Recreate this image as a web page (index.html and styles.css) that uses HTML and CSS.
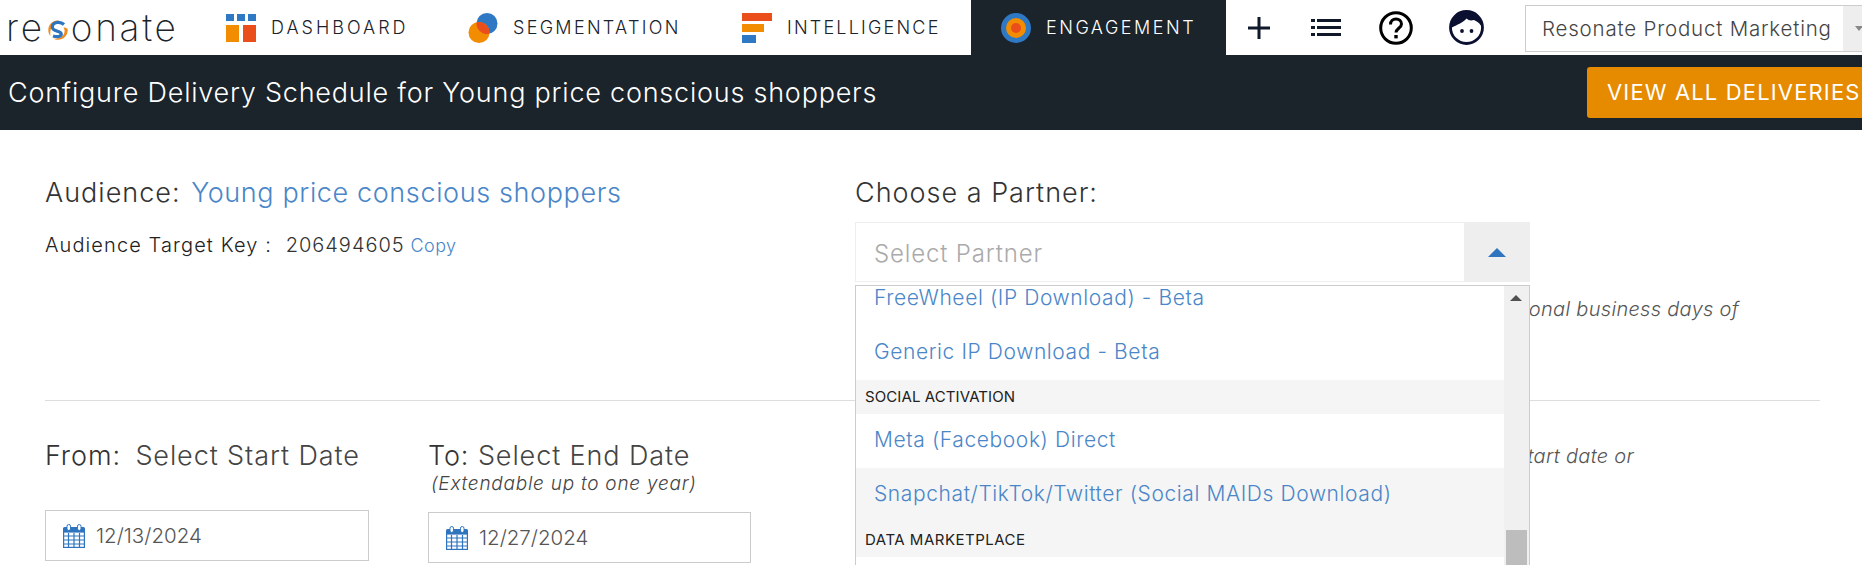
FILE: index.html
```html
<!DOCTYPE html>
<html lang="en">
<head>
<meta charset="utf-8">
<title>Configure Delivery Schedule</title>
<link rel="stylesheet" href="styles.css">
</head>
<body>
<header class="topbar">
  <div class="logo">
    <span>re</span>
    <svg class="logo-s" viewBox="0 0 20 20" width="20" height="20" aria-hidden="true">
      <path d="M11 .3C5 0 .3 4.500.3 10c0 2.500.8 4.500 2.200 6C1.500 10 4 2.500 11 .3z" fill="#f08c1e"/>
      <path d="M19.700 9c.5 6-4 10.700-9.700 10.700-2 0-3.500-.4-5-1.300 6 1.500 12.500-2.500 11.500-8.500-.2-1-.5-1.800-1-2.500 2 0 3.500.6 4.200 1.600z" fill="#f08c1e"/>
      <path d="M16 4.500C12 .8 4.500 2 4.300 7c0 5 9 3.500 9 7 0 2.500-4 3.500-8.300 2" fill="none" stroke="#2e74bf" stroke-width="3.200"/>
    </svg>
    <span>onate</span>
  </div>
  <nav class="nav">
    <a class="nav-item nav-dash">
      <svg viewBox="0 0 30 28" width="30" height="28" aria-hidden="true">
        <rect x="0" y="0" width="8" height="7" fill="#2e78c4"/><rect x="11" y="0" width="8" height="7" fill="#2e78c4"/><rect x="22" y="0" width="8" height="7" fill="#2e78c4"/>
        <rect x="0" y="11" width="13" height="17" fill="#f28c00"/><rect x="17" y="11" width="13" height="17" fill="#e94e1b"/>
      </svg>
      <span>DASHBOARD</span>
    </a>
    <a class="nav-item nav-seg">
      <svg viewBox="0 0 30 30" width="30" height="30" aria-hidden="true">
        <circle cx="19" cy="10.500" r="10.500" fill="#2e78c4"/>
        <circle cx="11" cy="19.500" r="10.500" fill="#f28c00"/>
        <path d="M8.570 9.290a10.500 10.500 0 0 1 12.860 11.420 10.500 10.500 0 0 1-12.860-11.420z" fill="#e94e1b"/>
      </svg>
      <span>SEGMENTATION</span>
    </a>
    <a class="nav-item nav-intel">
      <svg viewBox="0 0 30 30" width="30" height="30" aria-hidden="true">
        <rect x="0" y="0" width="30" height="8" fill="#e94e1b"/>
        <rect x="0" y="11" width="22" height="8" fill="#f28c00"/>
        <rect x="0" y="22" width="14" height="8" fill="#2e78c4"/>
      </svg>
      <span>INTELLIGENCE</span>
    </a>
    <a class="nav-item nav-eng">
      <svg viewBox="0 0 30 30" width="30" height="30" aria-hidden="true">
        <circle cx="15" cy="15" r="15" fill="#2e78c4"/>
        <circle cx="15" cy="15" r="10" fill="#f28c00"/>
        <circle cx="15" cy="15" r="5" fill="#e94e1b"/>
      </svg>
      <span>ENGAGEMENT</span>
    </a>
  </nav>
  <div class="actions">
    <span class="slot slot-plus">
      <svg viewBox="0 0 22 22" width="22" height="22" aria-hidden="true"><path d="M11 0v22M0 11h22" stroke="#10182c" stroke-width="3"/></svg>
    </span>
    <span class="slot slot-list">
      <svg viewBox="0 0 30 18" width="30" height="18" aria-hidden="true">
        <path d="M0 0h4v3H0zM0 7h4v3H0zM0 14h4v3H0zM6 0h24v3H6zM6 7h24v3H6zM6 14h24v3H6z" fill="#10182c"/>
      </svg>
    </span>
    <span class="slot slot-help">
      <svg viewBox="0 0 34 34" width="34" height="34" aria-hidden="true">
        <circle cx="17" cy="17" r="15.300" fill="none" stroke="#000" stroke-width="3"/>
        <path d="M11.500 13.500c0-3.500 2.500-5.500 5.500-5.500s5.500 2 5.500 5c0 4-5.500 4.500-5.500 8.500" fill="none" stroke="#000" stroke-width="3"/>
        <rect x="15.300" y="24" width="3.400" height="3.400"/>
      </svg>
    </span>
    <span class="slot slot-face">
      <svg viewBox="0 0 35 35" width="35" height="35" aria-hidden="true">
        <circle cx="17.500" cy="17.500" r="16" fill="#fff" stroke="#0b1030" stroke-width="2.800"/>
        <path d="M2 18C2 8 9 1 17.500 1S33 8 33 18c-1-3.500-4-6.500-8-8-3 1-5.500.5-7.500-1.500C15 12 8 15 2 18z" fill="#0b1030"/>
        <circle cx="13" cy="21" r="1.900" fill="#0b1030"/><circle cx="22.500" cy="21" r="1.900" fill="#0b1030"/>
      </svg>
    </span>
    <div class="account">
      <span class="account-name">Resonate Product Marketing</span>
      <span class="account-btn"><i class="account-caret"></i></span>
    </div>
  </div>
</header>

<section class="band">
  <h1 class="band-title">Configure Delivery Schedule for Young price conscious shoppers</h1>
  <a class="band-btn">VIEW ALL DELIVERIES</a>
</section>

<main class="content">
  <div class="row-top">
    <div class="col-audience">
      <h2 class="heading">Audience: <a class="link">Young price conscious shoppers</a></h2>
      <p class="key">
        <span class="key-label">Audience Target Key :</span>
        <span class="key-value">206494605</span>
        <a class="key-copy">Copy</a>
      </p>
    </div>
    <div class="col-partner">
      <h2 class="heading">Choose a Partner:</h2>
      <div class="picker">
        <div class="picker-box">
          <span class="picker-text">Select Partner</span>
          <span class="picker-btn"><i class="tri"></i></span>
        </div>
        <div class="menu">
          <ul class="menu-list">
            <li class="opt">FreeWheel (IP Download) - Beta</li>
            <li class="opt">Generic IP Download - Beta</li>
            <li class="group">SOCIAL ACTIVATION</li>
            <li class="opt">Meta (Facebook) Direct</li>
            <li class="opt opt-hover">Snapchat/TikTok/Twitter (Social MAIDs Download)</li>
            <li class="group group-last">DATA MARKETPLACE</li>
          </ul>
          <div class="scrollbar"><i class="scroll-up"></i><i class="scroll-thumb"></i></div>
        </div>
      </div>
      <p class="note note-partner">additional business days of</p>
    </div>
  </div>
  <hr class="rule">
  <div class="row-dates">
    <div class="date-col date-from">
      <h2 class="heading heading-date">From: <span class="hint hint-from">Select Start Date</span></h2>
      <div class="date-input">
        <svg class="cal" viewBox="0 0 22 24" width="22" height="24" aria-hidden="true"><use href="#cal"/></svg>
        <span>12/13/2024</span>
      </div>
    </div>
    <div class="date-col date-to">
      <h2 class="heading heading-date">To: <span class="hint">Select End Date</span></h2>
      <p class="extend">(Extendable up to one year)</p>
      <div class="date-input">
        <svg class="cal" viewBox="0 0 22 24" width="22" height="24" aria-hidden="true"><use href="#cal"/></svg>
        <span>12/27/2024</span>
      </div>
    </div>
    <p class="note note-date">on the selected start date or</p>
  </div>
</main>

<svg class="defs" width="0" height="0" aria-hidden="true">
  <symbol id="cal" viewBox="0 0 22 24">
    <path d="M1.500 3h19A1.500 1.500 0 0 1 22 4.500V9H0V4.500A1.500 1.500 0 0 1 1.500 3z" fill="#2e74bf"/>
    <rect x="0.600" y="8" width="20.800" height="15.400" fill="#fff" stroke="#2e74bf" stroke-width="1.200"/>
    <path d="M0 12h22M0 16h22M0 20h22M5.500 9v15M11 9v15M16.500 9v15" stroke="#2e74bf" stroke-width="1.200" fill="none"/>
    <rect x="4" y="0.500" width="3.500" height="6" rx="1.700" fill="#fff" stroke="#2e74bf"/>
    <rect x="14.500" y="0.500" width="3.500" height="6" rx="1.700" fill="#fff" stroke="#2e74bf"/>
  </symbol>
</svg>
</body>
</html>
```
FILE: styles.css
```css
* { box-sizing: border-box; }
html, body { margin: 0; height: 565px; overflow: hidden; background: #fff; }
body { font-family: Inter, "Liberation Sans", sans-serif; font-weight: 300; color: #333; }
h1, h2, p, ul { margin: 0; padding: 0; font-weight: inherit; }
ul { list-style: none; }
.defs { position: absolute; }

/* top bar */
.topbar { display: flex; height: 55px; width: 100%; }
.logo { flex: none; width: 226px; padding-left: 6px; display: flex; align-items: center; font-size: 37px; font-weight: 200; letter-spacing: 2.700px; color: #1b232b; line-height: 48px; }
.logo-s { margin: 5px 3px 0 3px; flex: none; }
.nav { display: flex; flex: none; }
.nav-item { display: flex; align-items: center; font-size: 18px; font-weight: 300; letter-spacing: 2.300px; color: #1b232b; }
.nav-item svg { flex: none; margin-right: 15px; }
.nav-dash { width: 242px; letter-spacing: 3px; }
.nav-seg { width: 274px; }
.nav-intel { width: 229px; letter-spacing: 2.200px; }
.nav-eng { width: 255px; padding-left: 30px; background: #1b232b; color: #fff; letter-spacing: 2.500px; }
.actions { display: flex; flex: none; align-items: center; padding-left: 22px; }
.slot { display: flex; flex: none; align-items: center; }
.slot-plus { width: 63px; }
.slot-list { width: 68px; }
.slot-help { width: 70px; }
.slot-face { width: 76px; }
.account { display: flex; width: 349px; height: 47px; margin-top: 1px; border: 1px solid #ccc; flex: none; }
.account-name { flex: 1; padding: 0 0 0 16px; line-height: 45px; font-size: 20.500px; letter-spacing: .8px; color: #444; white-space: nowrap; }
.account-btn { width: 30px; background: #eee; display: flex; align-items: center; padding-left: 12px; }
.account-caret { width: 0; height: 0; border: 4px solid transparent; border-bottom: 0; border-top: 5px solid #888; }

/* band */
.band { display: flex; align-items: center; height: 75px; background: #1b232b; overflow: hidden; }
.band-title { flex: 0 0 1587px; padding-left: 8px; font-size: 27px; font-weight: 300; letter-spacing: .77px; color: #fff; white-space: nowrap; }
.band-btn { flex: none; display: block; padding: 0 20px; height: 51px; line-height: 51px; background: #e68a00; border-radius: 3px; color: #fff; font-size: 22px; font-weight: 400; letter-spacing: 1.150px; white-space: nowrap; }

/* content */
.content { padding: 46px 42px 0 45px; }
.row-top { display: grid; grid-template-columns: 810px 1fr; height: 224px; }
.heading { font-size: 27px; line-height: 34px; letter-spacing: 1px; color: #333; white-space: nowrap; }
.link { color: #4a86c8; letter-spacing: .62px; margin-left: 2px; }
.key { margin-top: 20px; font-size: 20px; line-height: 30px; letter-spacing: 1.100px; color: #222; white-space: nowrap; }
.key-value { margin-left: 7px; color: #333; letter-spacing: 1px; }
.key-copy { font-size: 18px; letter-spacing: .45px; color: #4a86c8; margin-left: -1px; }
.col-partner { position: relative; }
.picker { position: absolute; top: 46px; left: 0; width: 675px; z-index: 2; }
.picker-box { display: flex; height: 60px; border: 1px solid #eee; align-items: stretch; background: #fff; }
.picker-text { flex: 1; padding-left: 18px; font-size: 24px; letter-spacing: .85px; line-height: 62px; color: #aaa; }
.picker-btn { width: 65px; background: #eee; display: flex; align-items: center; justify-content: center; }
.tri { width: 0; height: 0; border: 9px solid transparent; border-top: 0; border-bottom: 9px solid #2e74bf; }
.menu { position: relative; margin-top: 3px; height: 290px; border: 1px solid #ccc; background: #fff; overflow: hidden; padding-right: 25px; }
.menu-list { margin-top: -14px; }
.opt { height: 54px; padding-left: 18px; font-size: 21px; letter-spacing: .6px; line-height: 51px; color: #4a86c8; }
.opt-hover { background: #f5f5f5; }
.group { height: 34px; padding-left: 9px; font-size: 15px; font-weight: 400; letter-spacing: .1px; line-height: 34px; color: #222; background: #f5f5f5; }
.group-last { height: 35px; line-height: 36px; letter-spacing: .5px; }
.scrollbar { position: absolute; top: 0; right: 0; bottom: 0; width: 25px; background: #f0f0f0; }
.scroll-up { position: absolute; top: 9px; left: 6px; width: 0; height: 0; border: 6px solid transparent; border-top: 0; border-bottom: 6px solid #505050; }
.scroll-thumb { position: absolute; left: 2px; right: 2px; top: 244px; height: 46px; background: #bdbdbd; }
.note { font-size: 20px; font-style: italic; letter-spacing: .3px; color: #555; text-align: right; white-space: nowrap; }
.note-partner { position: absolute; top: 121px; left: 0; width: 884px; }

.rule { margin: 0; border: 0; border-top: 1px solid #ddd; }
.row-dates { display: grid; grid-template-columns: 383px 427px 1fr; padding-top: 38px; }
.heading-date { line-height: 34px; letter-spacing: .9px; }
.hint { color: #444; }
.hint-from { margin-left: 6px; }
.date-input { display: flex; align-items: center; height: 51px; padding-left: 17px; border: 1.500px solid #ccc; font-size: 20.500px; color: #555; }
.date-input .cal { margin-right: 11px; flex: none; }
.date-from .date-input { width: 324px; margin-top: 37px; }
.date-to .date-input { width: 323px; margin-top: 17px; }
.extend { margin-top: 0; padding-left: 3px; font-size: 19px; letter-spacing: .75px; line-height: 22px; font-style: italic; color: #444; white-space: nowrap; }
.note-date { width: 779px; margin-top: 5px; }
```
